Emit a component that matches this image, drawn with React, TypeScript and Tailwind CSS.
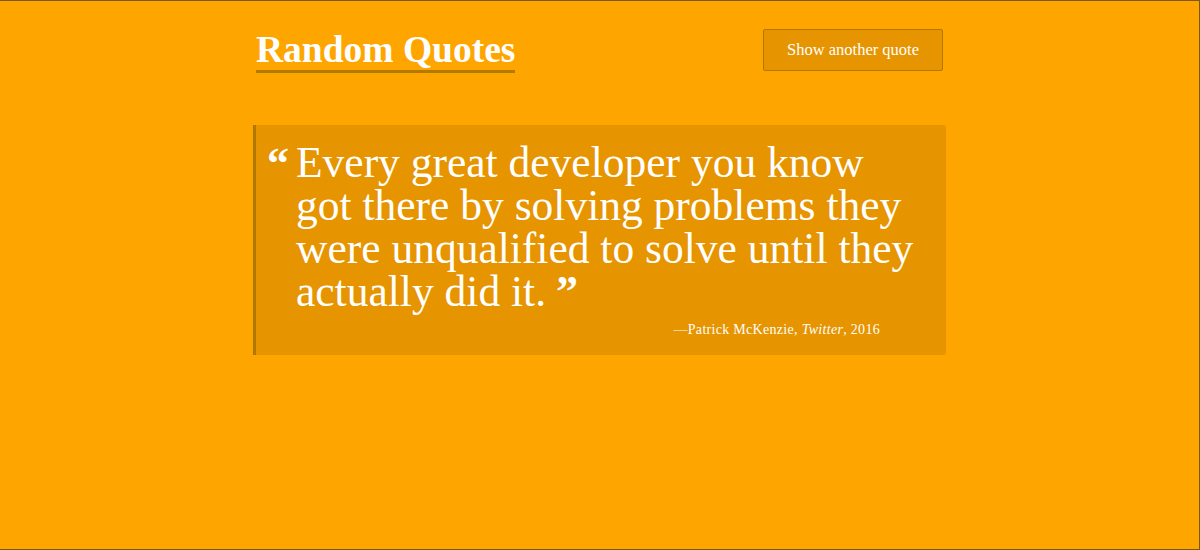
import React from "react";

export default function App() {
  const serif = { fontFamily: '"Liberation Serif", "DejaVu Serif", serif' };
  return (
    <div className="w-[1200px] h-[550px] bg-[#ffa500] border-t border-r border-b border-[#7a5a12] box-border overflow-hidden" style={serif}>
      <div className="w-[693px] mx-auto">
        <div className="flex justify-between items-start pt-[28px]">
          <h1 className="ml-[3px] mt-[3px] text-white font-bold text-[37.5px] leading-[36px] border-b-[3px] border-[#b37a00] pb-[2px] whitespace-nowrap">
            Random Quotes
          </h1>
          <button className="mr-[3px] w-[180px] h-[42px] bg-[#e69400] border border-[#b07800] rounded-[2px] text-white text-[16.5px]" style={serif}>
            Show another quote
          </button>
        </div>
        <div className="mt-[52px] h-[230px] bg-[#e69400] border-l-[3px] border-[#b07800] rounded-r-[3px] pt-[16px] pl-[12px] pr-[10px]">
          <div className="flex">
            <span className="w-[29px] shrink-0 text-white font-bold text-[44px] leading-[43px] mt-[1px] -ml-[1px]">“</span>
            <p className="text-white text-[43.5px] leading-[43px] whitespace-nowrap">
              Every great developer you know<br />
              got there by solving problems they<br />
              were unqualified to solve until they<br />
              actually did it.<span className="inline-block ml-[10px] font-bold text-[44px] leading-[30px] align-top mt-[7px]">”</span>
            </p>
          </div>
          <div className="text-right pr-[56px] mt-[6px] text-white text-[14px] tracking-[0.3px]">
            —Patrick McKenzie, <i>Twitter</i>, 2016
          </div>
        </div>
      </div>
    </div>
  );
}
